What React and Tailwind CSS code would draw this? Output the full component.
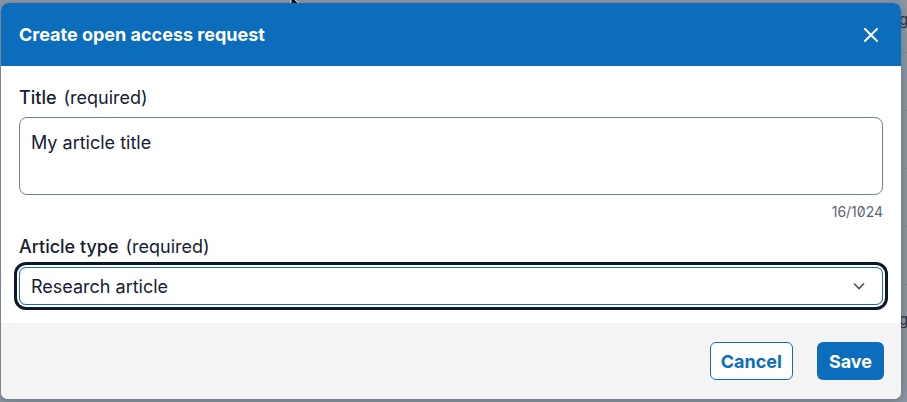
import React from "react";

function Cursor() {
  return (
    <svg className="absolute left-[290px] top-[-4px]" width="12" height="14" viewBox="0 0 12 14">
      <path d="M1 0 L1 11 L3.5 8.5 L5.5 13 L7.5 12 L5.5 7.8 L9 7.8 Z" fill="#000" stroke="#fff" strokeWidth="1" />
    </svg>
  );
}

export default function App() {
  const font = { fontFamily: "Inter, 'Noto Sans', sans-serif" };
  return (
    <div className="relative w-[907px] h-[402px] overflow-hidden bg-[#8b96a3]" style={font}>
      {/* faint page behind the backdrop */}
      <div className="absolute right-0 top-0 w-[6px] h-full flex flex-col">
        <div className="h-[53px] border-b border-[#7e8a97] text-[#2a3442] text-[15px] leading-[40px] -ml-[2px]">g</div>
        <div className="h-[58px] border-b border-[#7e8a97]"></div>
        <div className="h-[58px] border-b border-[#7e8a97]"></div>
        <div className="h-[58px] border-b border-[#7e8a97]"></div>
        <div className="h-[58px] border-b border-[#7e8a97]"></div>
        <div className="h-[58px] text-[#2a3442] text-[15px] leading-[70px] -ml-[2px]">g</div>
      </div>
      <Cursor />
      <div className="absolute left-[1px] top-[3px] w-[900px] h-[396px] rounded-[7px] overflow-hidden flex flex-col bg-white shadow-[0_2px_8px_rgba(0,0,0,0.25)]">
        <div className="h-[63px] shrink-0 bg-[#0b6dbc] flex items-center justify-between px-[18px]">
          <h2 className="text-white font-bold text-[18px] leading-[27px]">Create open access request</h2>
          <svg width="14" height="14" viewBox="0 0 14 14" className="mr-[5px]">
            <path d="M1 1 L13 13 M13 1 L1 13" stroke="#fff" strokeWidth="2" strokeLinecap="square" />
          </svg>
        </div>
        <div className="flex flex-col px-[18px] pt-[18px] pb-[18px] bg-white text-[#172030]">
          <label className="text-[18px] leading-[27px] mb-[6px]">
            <span className="font-medium">Title</span>
            <span className="ml-[7px] font-normal">(required)</span>
          </label>
          <div className="h-[78px] border border-[#6f8297] rounded-[8px] px-[11px] py-[11px] text-[18px] leading-[27px]">
            My article title
          </div>
          <div className="mt-[8px] text-right text-[14px] leading-[18px] text-[#5b6472] [font-feature-settings:'zero']">16/1024</div>
          <label className="mt-[12px] mb-[7px] text-[18px] leading-[27px]">
            <span className="font-medium">Article type</span>
            <span className="ml-[7px] font-normal">(required)</span>
          </label>
          <div className="h-[38px] border border-[#1b6db5] rounded-[7px] ring-[3px] ring-[#0f1828] ring-offset-2 ring-offset-white flex items-center justify-between pl-[11px] pr-[16px] text-[18px]">
            <span>Research article</span>
            <svg width="14" height="14" viewBox="0 0 14 14">
              <path d="M2 4.5 L7 9.5 L12 4.5" fill="none" stroke="#4a5463" strokeWidth="1.6" />
            </svg>
          </div>
        </div>
        <div className="flex-1 bg-[#f4f4f4] flex items-center justify-end gap-[24px] px-[17px]">
          <button className="h-[38px] px-[10px] rounded-[6px] border border-[#0b6dbc] bg-white text-[#0b6dbc] font-bold text-[18px]">Cancel</button>
          <button className="h-[38px] px-[12px] rounded-[6px] bg-[#0b6dbc] text-white font-bold text-[18px]">Save</button>
        </div>
      </div>
    </div>
  );
}
